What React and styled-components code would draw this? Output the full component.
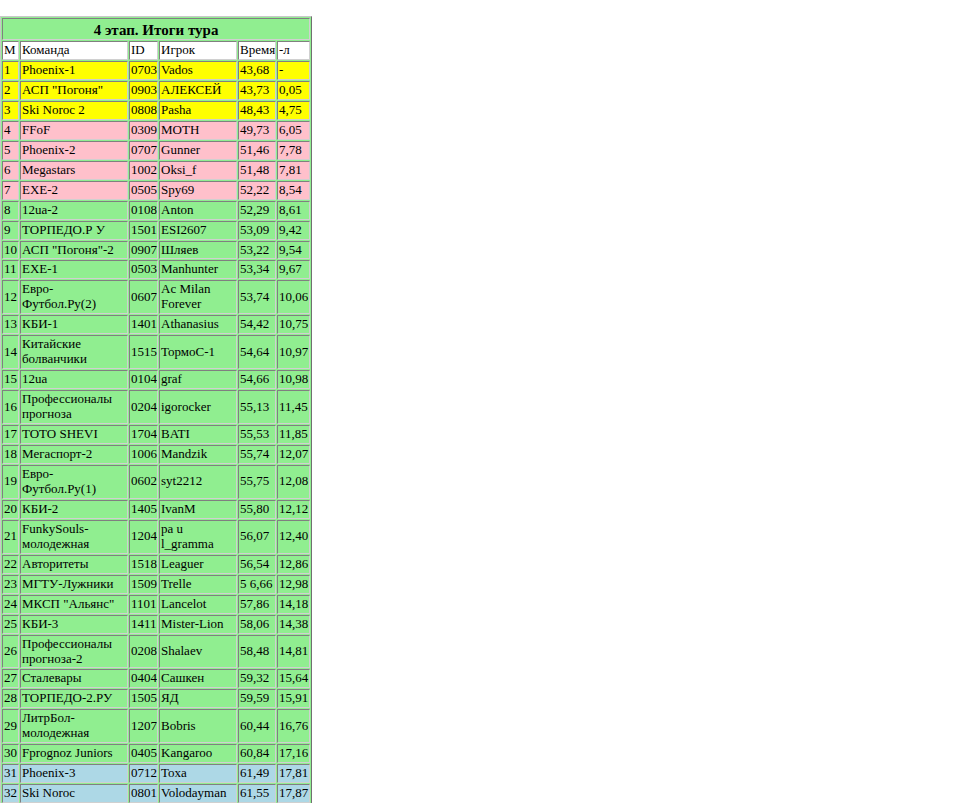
import { createGlobalStyle, styled } from 'styled-components';

const GlobalStyle = createGlobalStyle`
  body {
    margin: 0;
    background: #ffffff;
    font-family: "Liberation Serif", "Times New Roman", serif;
    color: #000;
  }
`;

const Page = styled.div`
  padding: 16px 0 0 0;
`;

const Table = styled.table`
  width: 312px;
  table-layout: fixed;
  border: 1px solid;
  border-color: #c8c8c8 #707070 #707070 #c8c8c8;
  border-spacing: 1px;
  background: #90ee90;
  font-size: 13px;
  line-height: 14.95px;
`;

const Title = styled.th`
  border: 1px solid;
  border-color: #808080 #d0d0d0 #d0d0d0 #808080;
  padding: 3px 1px 0;
  font-size: 15px;
  line-height: 17px;
  font-weight: bold;
  text-align: center;
`;

const Row = styled.tr`
  background: ${(p) => p.$bg || '#90ee90'};
`;

const Cell = styled.td`
  border: 1px solid;
  border-color: #808080 #d0d0d0 #d0d0d0 #808080;
  padding: 1px;
  text-align: left;
  vertical-align: middle;
  white-space: pre-line;
  overflow: hidden;
`;

const HeadCell = styled(Cell)`
  background: #ffffff;
  font-weight: normal;
`;

const colors = {
  top: '#ffff00',
  mid: '#ffc0cb',
  low: '#add8e6',
};

const rows = [
  ['1', 'Phoenix-1', '0703', 'Vados', '43,68', '-', 'top'],
  ['2', 'АСП "Погоня"', '0903', 'АЛЕКСЕЙ', '43,73', '0,05', 'top'],
  ['3', 'Ski Noroc 2', '0808', 'Pasha', '48,43', '4,75', 'top'],
  ['4', 'FFoF', '0309', 'MOTH', '49,73', '6,05', 'mid'],
  ['5', 'Phoenix-2', '0707', 'Gunner', '51,46', '7,78', 'mid'],
  ['6', 'Megastars', '1002', 'Oksi_f', '51,48', '7,81', 'mid'],
  ['7', 'EXE-2', '0505', 'Spy69', '52,22', '8,54', 'mid'],
  ['8', '12ua-2', '0108', 'Anton', '52,29', '8,61'],
  ['9', 'ТОРПЕДО.Р У', '1501', 'ESI2607', '53,09', '9,42'],
  ['10', 'АСП "Погоня"-2', '0907', 'Шляев', '53,22', '9,54'],
  ['11', 'EXE-1', '0503', 'Manhunter', '53,34', '9,67'],
  ['12', 'Евро-\nФутбол.Ру(2)', '0607', 'Ac Milan\nForever', '53,74', '10,06'],
  ['13', 'КБИ-1', '1401', 'Athanasius', '54,42', '10,75'],
  ['14', 'Китайские\nболванчики', '1515', 'ТормоС-1', '54,64', '10,97'],
  ['15', '12ua', '0104', 'graf', '54,66', '10,98'],
  ['16', 'Профессионалы\nпрогноза', '0204', 'igorocker', '55,13', '11,45'],
  ['17', 'TOTO SHEVI', '1704', 'BATI', '55,53', '11,85'],
  ['18', 'Мегаспорт-2', '1006', 'Mandzik', '55,74', '12,07'],
  ['19', 'Евро-\nФутбол.Ру(1)', '0602', 'syt2212', '55,75', '12,08'],
  ['20', 'КБИ-2', '1405', 'IvanM', '55,80', '12,12'],
  ['21', 'FunkySouls-\nмолодежная', '1204', 'pa u\nl_gramma', '56,07', '12,40'],
  ['22', 'Авторитеты', '1518', 'Leaguer', '56,54', '12,86'],
  ['23', 'МГТУ-Лужники', '1509', 'Trelle', '5 6,66', '12,98'],
  ['24', 'МКСП "Альянс"', '1101', 'Lancelot', '57,86', '14,18'],
  ['25', 'КБИ-3', '1411', 'Mister-Lion', '58,06', '14,38'],
  ['26', 'Профессионалы\nпрогноза-2', '0208', 'Shalaev', '58,48', '14,81'],
  ['27', 'Сталевары', '0404', 'Сашкен', '59,32', '15,64'],
  ['28', 'ТОРПЕДО-2.РУ', '1505', 'ЯД', '59,59', '15,91'],
  ['29', 'ЛитрБол-\nмолодежная', '1207', 'Bobris', '60,44', '16,76'],
  ['30', 'Fprognoz Juniors', '0405', 'Kangaroo', '60,84', '17,16'],
  ['31', 'Phoenix-3', '0712', 'Toxa', '61,49', '17,81', 'low'],
  ['32', 'Ski Noroc', '0801', 'Volodayman', '61,55', '17,87', 'low'],
];

export default function App() {
  return (
    <Page>
      <GlobalStyle />
      <Table>
        <colgroup>
          <col style={{ width: 17 }} />
          <col style={{ width: 108 }} />
          <col style={{ width: 29 }} />
          <col style={{ width: 78 }} />
          <col style={{ width: 38 }} />
          <col style={{ width: 33 }} />
        </colgroup>
        <tbody>
          <tr>
            <Title colSpan={6}>4 этап. Итоги тура</Title>
          </tr>
          <tr>
            <HeadCell>M</HeadCell>
            <HeadCell>Команда</HeadCell>
            <HeadCell>ID</HeadCell>
            <HeadCell>Игрок</HeadCell>
            <HeadCell>Время</HeadCell>
            <HeadCell>-л</HeadCell>
          </tr>
          {rows.map(([place, team, id, player, time, diff, tone]) => (
            <Row key={place} $bg={colors[tone]}>
              <Cell>{place}</Cell>
              <Cell>{team}</Cell>
              <Cell>{id}</Cell>
              <Cell>{player}</Cell>
              <Cell>{time}</Cell>
              <Cell>{diff}</Cell>
            </Row>
          ))}
        </tbody>
      </Table>
    </Page>
  );
}
